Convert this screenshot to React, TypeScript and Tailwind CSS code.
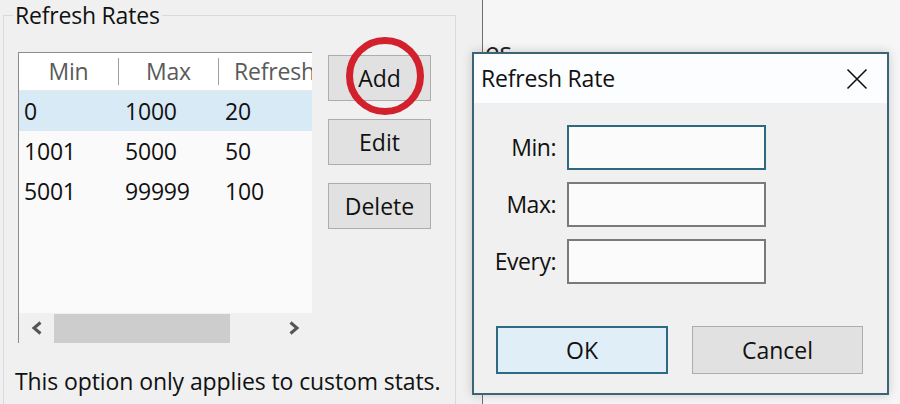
import React from "react";

const rows = [
  ["0", "1000", "20"],
  ["1001", "5000", "50"],
  ["5001", "99999", "100"],
];

function WinButton({ children, className = "" }: { children: React.ReactNode; className?: string }) {
  return (
    <div
      className={
        "flex items-center justify-center border border-[#adadad] bg-[#e1e1e1] text-[23px] text-[#111] " +
        className
      }
    >
      {children}
    </div>
  );
}

export default function App() {
  return (
    <div className="relative flex h-[404px] w-[900px] overflow-hidden font-['Open_Sans',sans-serif] text-[#111]">
      {/* Left window */}
      <div className="h-full w-[483px] shrink-0 border-r border-[#6f6f6f] bg-[#f0f0f0] pl-[3px]">
        <fieldset className="h-[440px] w-[453px] border border-[#dadada] pl-[14px] pt-[22px]">
          <legend className="-ml-[5px] px-[2px] text-[23px] leading-[30px] tracking-[-0.2px]">Refresh Rates</legend>
          <div className="flex gap-[16px]">
            {/* List view */}
            <div className="flex h-[291px] w-[294px] flex-col border-l border-t border-[#8c8c8c] bg-[#fafafa]">
              <div className="flex h-[38px] shrink-0 items-center border-b border-[#e8e8e8] bg-white text-[23px] tracking-[-0.2px] text-[#5a5a5a]">
                <div className="flex h-[27px] w-[100px] items-center justify-center border-r border-[#a0a0a0]">Min</div>
                <div className="flex h-[27px] w-[100px] items-center justify-center border-r border-[#a0a0a0]">Max</div>
                <div className="flex h-[27px] min-w-0 flex-1 items-center overflow-hidden whitespace-nowrap pl-[15px]">Refresh</div>
              </div>
              <div className="flex-1">
                {rows.map((r, i) => (
                  <div
                    key={i}
                    className={
                      "flex h-[40px] items-center text-[23px] tracking-[-0.2px] " +
                      (i === 0 ? "bg-[#d9eaf7]" : "")
                    }
                  >
                    <div className="w-[100px] pl-[5px]">{r[0]}</div>
                    <div className="w-[100px] pl-[6px]">{r[1]}</div>
                    <div className="flex-1 pl-[6px]">{r[2]}</div>
                  </div>
                ))}
              </div>
              {/* Horizontal scrollbar */}
              <div className="flex h-[30px] shrink-0 items-center bg-[#f0f0f0]">
                <div className="flex w-[35px] items-center justify-center">
                  <svg width="16" height="16" viewBox="0 0 16 16">
                    <path d="M11.5 2.5 L5 8 L11.5 13.5" fill="none" stroke="#555" strokeWidth="3" />
                  </svg>
                </div>
                <div className="h-[29px] w-[176px] bg-[#cdcdcd]" />
                <div className="flex-1" />
                <div className="flex w-[36px] items-center justify-center">
                  <svg width="16" height="16" viewBox="0 0 16 16">
                    <path d="M4.5 2.5 L11 8 L4.5 13.5" fill="none" stroke="#555" strokeWidth="3" />
                  </svg>
                </div>
              </div>
            </div>
            {/* Buttons */}
            <div className="flex w-[103px] flex-col gap-[18px] pt-[3px]">
              <WinButton className="h-[46px]">Add</WinButton>
              <WinButton className="h-[46px]">Edit</WinButton>
              <WinButton className="h-[46px]">Delete</WinButton>
            </div>
          </div>
          <p className="-ml-[3px] mt-[23px] whitespace-nowrap text-[23px] leading-[30px] tracking-[-0.1px]">
            This option only applies to custom stats.
          </p>
        </fieldset>
      </div>

      {/* Window behind */}
      <div className="h-full flex-1 bg-[#f6f6f6] pl-[2px] pt-[36px]">
        <div className="text-[26px] leading-[30px] text-[#222]">es</div>
      </div>

      {/* Red annotation circle */}
      <svg className="absolute left-[346px] top-[37px]" width="78" height="78" viewBox="0 0 78 78">
        <circle cx="39" cy="39" r="35.5" fill="none" stroke="#d2202c" strokeWidth="7" />
      </svg>

      {/* Dialog */}
      <div className="absolute left-[472px] top-[52px] flex h-[343px] w-[417px] flex-col border-2 border-[#3d6376] bg-[#f0f0f0] shadow-[0_0_10px_rgba(0,0,0,0.18)]">
        <div className="flex h-[49px] shrink-0 items-center justify-between bg-[#fbfdfe] pl-[7px] pr-[19px]">
          <span className="text-[23px] tracking-[-0.2px]">Refresh Rate</span>
          <svg width="22" height="22" viewBox="0 0 22 22">
            <path d="M1.5 1.5 L20.5 20.5 M20.5 1.5 L1.5 20.5" stroke="#111" strokeWidth="1.6" />
          </svg>
        </div>
        <div className="flex flex-1 flex-col pt-[22px]">
          <div className="flex flex-col gap-[12px]">
            {[
              ["Min:", true],
              ["Max:", false],
              ["Every:", false],
            ].map(([label, focused], i) => (
              <div key={i} className="flex items-center gap-[11px]">
                <div className="w-[82px] text-right text-[23px] tracking-[-0.5px]">{label as string}</div>
                <div
                  className={
                    "h-[45px] w-[199px] border-2 bg-[#fbfbfb] " +
                    (focused ? "border-[#2b6a80]" : "border-[#7a7a7a]")
                  }
                />
              </div>
            ))}
          </div>
          <div className="mt-[42px] flex gap-[24px] pl-[22px]">
            <div className="flex h-[48px] w-[172px] items-center justify-center border-2 border-[#2d6a84] bg-[#e0eef8] text-[23px]">
              OK
            </div>
            <div className="flex h-[48px] w-[171px] items-center justify-center border border-[#adadad] bg-[#e1e1e1] text-[23px]">
              Cancel
            </div>
          </div>
        </div>
      </div>
    </div>
  );
}
